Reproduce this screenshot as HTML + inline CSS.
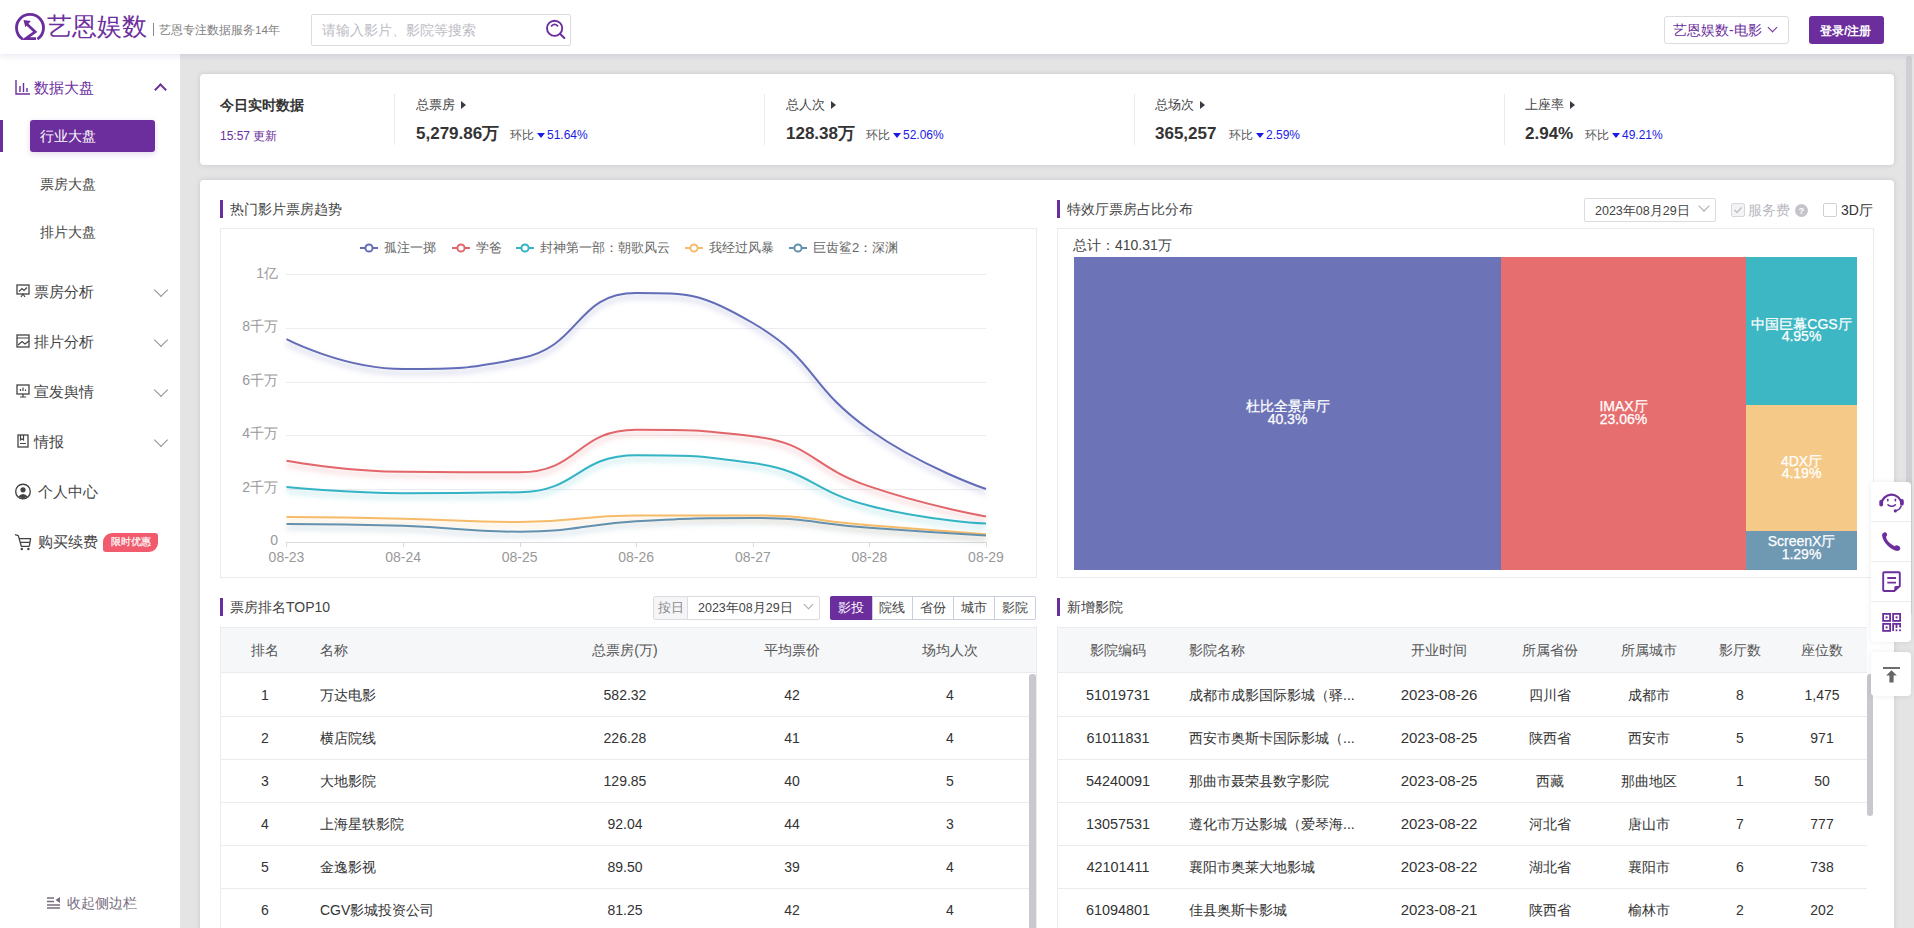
<!DOCTYPE html>
<html><head><meta charset="utf-8"><style>
*{margin:0;padding:0;box-sizing:border-box}
html,body{width:1914px;height:928px;overflow:hidden}
body{font-family:"Liberation Sans",sans-serif;background:#e4e4e4;position:relative;color:#333}
.abs{position:absolute}
.t{position:absolute;white-space:nowrap;line-height:1}
#hdr{position:absolute;left:0;top:0;width:1914px;height:54px;background:#fff;box-shadow:0 2px 6px rgba(50,50,130,0.11);z-index:5}
#side{position:absolute;left:0;top:54px;width:180px;height:874px;background:#fff}
.card{position:absolute;background:#fff;border-radius:4px;box-shadow:0 0 5px rgba(60,40,100,0.16)}
.purple{color:#6c2e9d}
.bar{position:absolute;width:3px;height:18px;background:#6c2e9d}
.box{position:absolute;border:1px solid #ebebef}
.row{position:absolute;height:1px;background:#ebebef}
.cell{position:absolute;white-space:nowrap;line-height:1;font-size:14px;color:#333}
.c{transform:translateX(-50%)}
.hd{color:#555}
.chev{position:absolute;width:10px;height:10px;border-right:1.7px solid #8f8f96;border-bottom:1.7px solid #8f8f96;transform:rotate(45deg)}

</style></head><body>
<div id="hdr">
  <svg class="abs" style="left:0;top:0" width="50" height="50" viewBox="0 0 50 50">
    <path d="M22.6 39.2 A13.5 13.5 0 1 1 37.4 39.2" fill="none" stroke="#6c2e9d" stroke-width="2.8"/>
    <path d="M26.8 24 L35.2 31.9 L25.6 38.6 L36 38.6" fill="none" stroke="#6c2e9d" stroke-width="2.7" stroke-linejoin="miter" stroke-miterlimit="6"/>
    <path d="M23.5 20.1 L30.9 21 L25.3 27.2Z" fill="#6c2e9d"/>
  </svg>
  <div class="t purple" style="left:47px;top:14.5px;font-size:24.7px">艺恩娱数</div>
  <div class="abs" style="left:153px;top:23px;width:1px;height:13px;background:#888"></div>
  <div class="t" style="left:159px;top:23.5px;font-size:11.7px;color:#808080">艺恩专注数据服务14年</div>
  <div class="abs" style="left:311px;top:14px;width:260px;height:32px;border:1px solid #dcdce0;border-radius:2px"></div>
  <div class="t" style="left:322px;top:23px;font-size:14px;color:#bcbcc4">请输入影片、影院等搜索</div>
  <svg class="abs" style="left:535px;top:12px" width="40" height="36" viewBox="535 12 40 36">
    <circle cx="554.6" cy="28.3" r="7.6" fill="none" stroke="#6c2e9d" stroke-width="1.9"/>
    <path d="M551.6 25.8 Q554.6 23 557.6 25.8" fill="none" stroke="#6c2e9d" stroke-width="1.8" stroke-linecap="round"/>
    <path d="M560 33.8 L564.3 38" stroke="#6c2e9d" stroke-width="2.1" stroke-linecap="round"/>
  </svg>
  <div class="abs" style="left:1664px;top:16px;width:125px;height:28px;border:1px solid #dcdce0;border-radius:3px"></div>
  <div class="t purple" style="left:1673px;top:23px;font-size:14px">艺恩娱数-电影</div>
  <div class="abs" style="left:1769px;top:24px;width:7px;height:7px;border-right:1.5px solid #6c2e9d;border-bottom:1.5px solid #6c2e9d;transform:rotate(45deg)"></div>
  <div class="abs" style="left:1809px;top:16px;width:75px;height:28px;background:#6c2e9d;border-radius:3px"></div>
  <div class="t" style="left:1820px;top:24.5px;font-size:12.2px;color:#fff;font-weight:bold">登录/注册</div>
</div>

<div id="side">
</div>
<!--sidebar content uses absolute page coords-->
<svg class="abs" style="left:15px;top:79px" width="16" height="16" viewBox="0 0 16 16">
  <path d="M1 1 V15 H15" fill="none" stroke="#6c2e9d" stroke-width="1.4"/>
  <path d="M5 7 V13 M8.5 4 V13 M12 9 V13" stroke="#6c2e9d" stroke-width="1.4"/>
</svg>
<div class="t purple" style="left:34px;top:80px;font-size:15px">数据大盘</div>
<div class="abs" style="left:156px;top:85px;width:9px;height:9px;border-left:2px solid #6c2e9d;border-top:2px solid #6c2e9d;transform:rotate(45deg)"></div>
<div class="abs" style="left:0;top:120px;width:3px;height:32px;background:#6c2e9d"></div>
<div class="abs" style="left:30px;top:120px;width:125px;height:32px;background:#6c2e9d;border-radius:3px;box-shadow:0 2px 6px rgba(108,46,157,0.18)"></div>
<div class="t" style="left:40px;top:129px;font-size:14px;color:#fff">行业大盘</div>
<div class="t" style="left:40px;top:177px;font-size:14px;color:#444">票房大盘</div>
<div class="t" style="left:40px;top:225px;font-size:14px;color:#444">排片大盘</div>

<!-- menu items -->
<svg class="abs" style="left:16px;top:284px" width="14" height="14" viewBox="0 0 14 14"><rect x="1" y="1" width="12" height="9" fill="none" stroke="#444" stroke-width="1.3"/><path d="M3 7.5 L6 4.5 L8 6.5 L11 3.5 M5 13 L7 10 L9 13" fill="none" stroke="#444" stroke-width="1.2"/></svg>
<div class="t" style="left:34px;top:284px;font-size:15px;color:#444">票房分析</div>
<div class="chev" style="left:155.5px;top:284.5px"></div>
<svg class="abs" style="left:16px;top:334px" width="14" height="14" viewBox="0 0 14 14"><rect x="1" y="1" width="12" height="12" fill="none" stroke="#444" stroke-width="1.3"/><path d="M1 4 H13 M2 11 L6 7.5 L9 10 L13 7" fill="none" stroke="#444" stroke-width="1.2"/></svg>
<div class="t" style="left:34px;top:334px;font-size:15px;color:#444">排片分析</div>
<div class="chev" style="left:155.5px;top:334.5px"></div>
<svg class="abs" style="left:16px;top:384px" width="14" height="14" viewBox="0 0 14 14"><rect x="1" y="1" width="12" height="9" fill="none" stroke="#444" stroke-width="1.3"/><path d="M4 13 H10 M7 10 V13 M4.5 7 V5 M7 7 V3.5 M9.5 7 V5.5" fill="none" stroke="#444" stroke-width="1.2"/></svg>
<div class="t" style="left:34px;top:384px;font-size:15px;color:#444">宣发舆情</div>
<div class="chev" style="left:155.5px;top:384.5px"></div>
<svg class="abs" style="left:17px;top:434px" width="12" height="14" viewBox="0 0 12 14"><rect x="1" y="1" width="10" height="12" fill="none" stroke="#444" stroke-width="1.3"/><path d="M3.5 1 V6 L5 5 L6.5 6 V1 M3 9.5 H9" fill="none" stroke="#444" stroke-width="1.2"/></svg>
<div class="t" style="left:34px;top:434px;font-size:15px;color:#444">情报</div>
<div class="chev" style="left:155.5px;top:434.5px"></div>
<svg class="abs" style="left:14px;top:483px" width="18" height="17" viewBox="0 0 18 17"><circle cx="9" cy="8.5" r="7.3" fill="none" stroke="#444" stroke-width="1.4"/><circle cx="9" cy="6.8" r="2.6" fill="#444"/><path d="M4.2 13.5 Q9 8.5 13.8 13.5 Q9 17 4.2 13.5Z" fill="#444"/></svg>
<div class="t" style="left:38px;top:484px;font-size:15px;color:#444">个人中心</div>
<svg class="abs" style="left:0;top:520px" width="40" height="40" viewBox="0 520 40 40"><path d="M15 534.6 L18.3 535.6 L21.3 546.3 H29.2 M19.4 538.6 H30.6 L29.3 546.3 M20.5 542.4 H29.9" fill="none" stroke="#444" stroke-width="1.3" stroke-linejoin="round"/><circle cx="21.8" cy="549" r="1.2" fill="#444"/><circle cx="28.4" cy="549" r="1.2" fill="#444"/></svg>
<div class="t" style="left:38px;top:534px;font-size:15px;color:#444">购买续费</div>
<div class="abs" style="left:103px;top:533px;width:55px;height:19px;background:#f25a6e;border-radius:9px 3px 9px 3px"></div>
<div class="t" style="left:111px;top:537px;font-size:10px;color:#fff;-webkit-text-stroke:0.2px #fff">限时优惠</div>

<svg class="abs" style="left:47px;top:897px" width="13" height="12" viewBox="0 0 13 12"><path d="M0 1 H7 M0 4.5 H7 M0 8 H13 M0 11 H13" stroke="#776c7e" stroke-width="1.3"/><path d="M13 0 V6 L8.5 3Z" fill="#776c7e"/></svg>
<div class="t" style="left:67px;top:896px;font-size:14px;color:#776c7e">收起侧边栏</div>

<!-- scrollbar -->
<div class="abs" style="left:1906px;top:56px;width:6px;height:560px;background:#d0d0d4;border-radius:3px"></div>

<!-- stats card -->
<div class="card" style="left:200px;top:74px;width:1694px;height:91px"></div>
<div class="t" style="left:220px;top:98px;font-size:14px;font-weight:bold;color:#333">今日实时数据</div>
<div class="t purple" style="left:220px;top:130px;font-size:12px">15:57 更新</div>
<div class="abs" style="left:394px;top:94px;width:1px;height:51px;background:#ebebef"></div>
<div class="abs" style="left:764px;top:94px;width:1px;height:51px;background:#ebebef"></div>
<div class="abs" style="left:1134px;top:94px;width:1px;height:51px;background:#ebebef"></div>
<div class="abs" style="left:1504px;top:94px;width:1px;height:51px;background:#ebebef"></div>
<div class="t" style="left:416px;top:98px;font-size:13px;color:#444">总票房</div>
<div class="abs" style="left:461px;top:101px;width:0;height:0;border-top:4px solid transparent;border-bottom:4px solid transparent;border-left:5.5px solid #3a3a44"></div>
<span id="v_416" class="t" style="left:416px;top:125px;font-size:17px;font-weight:bold;color:#333">5,279.86万</span>
<span class="t" style="left:510px;top:129px;font-size:12px;color:#555">环比<span style="display:inline-block;width:0;height:0;border-left:4px solid transparent;border-right:4px solid transparent;border-top:5px solid #1a1ae6;margin:0 2px 1px 3px;vertical-align:middle"></span><span style="color:#1a1ae6">51.64%</span></span>
<div class="t" style="left:786px;top:98px;font-size:13px;color:#444">总人次</div>
<div class="abs" style="left:831px;top:101px;width:0;height:0;border-top:4px solid transparent;border-bottom:4px solid transparent;border-left:5.5px solid #3a3a44"></div>
<span id="v_786" class="t" style="left:786px;top:125px;font-size:17px;font-weight:bold;color:#333">128.38万</span>
<span class="t" style="left:866px;top:129px;font-size:12px;color:#555">环比<span style="display:inline-block;width:0;height:0;border-left:4px solid transparent;border-right:4px solid transparent;border-top:5px solid #1a1ae6;margin:0 2px 1px 3px;vertical-align:middle"></span><span style="color:#1a1ae6">52.06%</span></span>
<div class="t" style="left:1155px;top:98px;font-size:13px;color:#444">总场次</div>
<div class="abs" style="left:1200px;top:101px;width:0;height:0;border-top:4px solid transparent;border-bottom:4px solid transparent;border-left:5.5px solid #3a3a44"></div>
<span id="v_1155" class="t" style="left:1155px;top:125px;font-size:17px;font-weight:bold;color:#333">365,257</span>
<span class="t" style="left:1229px;top:129px;font-size:12px;color:#555">环比<span style="display:inline-block;width:0;height:0;border-left:4px solid transparent;border-right:4px solid transparent;border-top:5px solid #1a1ae6;margin:0 2px 1px 3px;vertical-align:middle"></span><span style="color:#1a1ae6">2.59%</span></span>
<div class="t" style="left:1525px;top:98px;font-size:13px;color:#444">上座率</div>
<div class="abs" style="left:1570px;top:101px;width:0;height:0;border-top:4px solid transparent;border-bottom:4px solid transparent;border-left:5.5px solid #3a3a44"></div>
<span id="v_1525" class="t" style="left:1525px;top:125px;font-size:17px;font-weight:bold;color:#333">2.94%</span>
<span class="t" style="left:1585px;top:129px;font-size:12px;color:#555">环比<span style="display:inline-block;width:0;height:0;border-left:4px solid transparent;border-right:4px solid transparent;border-top:5px solid #1a1ae6;margin:0 2px 1px 3px;vertical-align:middle"></span><span style="color:#1a1ae6">49.21%</span></span>

<!-- main card -->
<div class="card" style="left:200px;top:180px;width:1694px;height:760px"></div>
<div class="bar" style="left:220px;top:200px"></div>
<div class="t" style="left:230px;top:202px;font-size:14px;color:#444">热门影片票房趋势</div>
<div class="box" style="left:220px;top:228px;width:817px;height:350px"></div>
<svg class="abs" style="left:360px;top:243px" width="18" height="10" viewBox="0 0 18 10"><path d="M0 5 H18" stroke="#626cb7" stroke-width="2"/><circle cx="9" cy="5" r="3.6" fill="#fff" stroke="#626cb7" stroke-width="2"/></svg>
<div class="t" style="left:384px;top:241px;font-size:13px;color:#666">孤注一掷</div>
<svg class="abs" style="left:452px;top:243px" width="18" height="10" viewBox="0 0 18 10"><path d="M0 5 H18" stroke="#e2656a" stroke-width="2"/><circle cx="9" cy="5" r="3.6" fill="#fff" stroke="#e2656a" stroke-width="2"/></svg>
<div class="t" style="left:476px;top:241px;font-size:13px;color:#666">学爸</div>
<svg class="abs" style="left:516px;top:243px" width="18" height="10" viewBox="0 0 18 10"><path d="M0 5 H18" stroke="#33b3c3" stroke-width="2"/><circle cx="9" cy="5" r="3.6" fill="#fff" stroke="#33b3c3" stroke-width="2"/></svg>
<div class="t" style="left:540px;top:241px;font-size:13px;color:#666">封神第一部：朝歌风云</div>
<svg class="abs" style="left:685px;top:243px" width="18" height="10" viewBox="0 0 18 10"><path d="M0 5 H18" stroke="#f5bb68" stroke-width="2"/><circle cx="9" cy="5" r="3.6" fill="#fff" stroke="#f5bb68" stroke-width="2"/></svg>
<div class="t" style="left:709px;top:241px;font-size:13px;color:#666">我经过风暴</div>
<svg class="abs" style="left:789px;top:243px" width="18" height="10" viewBox="0 0 18 10"><path d="M0 5 H18" stroke="#6290ae" stroke-width="2"/><circle cx="9" cy="5" r="3.6" fill="#fff" stroke="#6290ae" stroke-width="2"/></svg>
<div class="t" style="left:813px;top:241px;font-size:13px;color:#666">巨齿鲨2：深渊</div>
<div class="t" style="right:1636px;top:265.5px;font-size:14px;color:#999">1亿</div>
<div class="t" style="right:1636px;top:319.1px;font-size:14px;color:#999">8千万</div>
<div class="t" style="right:1636px;top:372.6px;font-size:14px;color:#999">6千万</div>
<div class="t" style="right:1636px;top:426.1px;font-size:14px;color:#999">4千万</div>
<div class="t" style="right:1636px;top:479.7px;font-size:14px;color:#999">2千万</div>
<div class="t" style="right:1636px;top:533.2px;font-size:14px;color:#999">0</div>
<div class="t c" style="left:286.5px;top:550px;font-size:14px;color:#999">08-23</div>
<div class="t c" style="left:403.1px;top:550px;font-size:14px;color:#999">08-24</div>
<div class="t c" style="left:519.7px;top:550px;font-size:14px;color:#999">08-25</div>
<div class="t c" style="left:636.2px;top:550px;font-size:14px;color:#999">08-26</div>
<div class="t c" style="left:752.8px;top:550px;font-size:14px;color:#999">08-27</div>
<div class="t c" style="left:869.4px;top:550px;font-size:14px;color:#999">08-28</div>
<div class="t c" style="left:986.0px;top:550px;font-size:14px;color:#999">08-29</div>
<svg class="abs" style="left:0;top:0" width="1914" height="928" viewBox="0 0 1914 928">
<defs><filter id="sh" x="-10%" y="-50%" width="120%" height="200%"><feGaussianBlur stdDeviation="2.5"/></filter></defs>
<line x1="286" x2="986" y1="274.5" y2="274.5" stroke="#ededf0" stroke-width="1"/>
<line x1="286" x2="986" y1="328.5" y2="328.5" stroke="#ededf0" stroke-width="1"/>
<line x1="286" x2="986" y1="382.5" y2="382.5" stroke="#ededf0" stroke-width="1"/>
<line x1="286" x2="986" y1="435.5" y2="435.5" stroke="#ededf0" stroke-width="1"/>
<line x1="286" x2="986" y1="489.5" y2="489.5" stroke="#ededf0" stroke-width="1"/>
<line x1="286" x2="986" y1="542.5" y2="542.5" stroke="#dcdce0" stroke-width="1"/>
<line x1="286.5" x2="286.5" y1="542" y2="547" stroke="#d9d9de" stroke-width="1"/>
<line x1="403.5" x2="403.5" y1="542" y2="547" stroke="#d9d9de" stroke-width="1"/>
<line x1="520.5" x2="520.5" y1="542" y2="547" stroke="#d9d9de" stroke-width="1"/>
<line x1="636.5" x2="636.5" y1="542" y2="547" stroke="#d9d9de" stroke-width="1"/>
<line x1="753.5" x2="753.5" y1="542" y2="547" stroke="#d9d9de" stroke-width="1"/>
<line x1="869.5" x2="869.5" y1="542" y2="547" stroke="#d9d9de" stroke-width="1"/>
<line x1="986.5" x2="986.5" y1="542" y2="547" stroke="#d9d9de" stroke-width="1"/>
<path d="M286.50 339.20 C286.50 339.20 343.98 369.00 403.08 369.00 C460.57 369.00 465.26 369.00 519.67 358.60 C581.85 346.71 574.89 293.00 636.25 293.00 C691.47 293.00 702.44 293.43 752.83 323.00 C819.02 361.83 805.60 384.37 869.42 429.80 C922.19 467.37 986.00 489.00 986.00 489.00" fill="none" stroke="#626cb7" stroke-width="5" stroke-opacity="0.18" transform="translate(0,4)" filter="url(#sh)"/>
<path d="M286.50 460.80 C286.50 460.80 344.66 471.40 403.08 471.80 C461.25 472.20 463.18 472.20 519.67 472.20 C579.77 472.20 576.19 429.80 636.25 429.80 C692.78 429.80 696.96 429.80 752.83 436.30 C813.55 443.36 809.60 465.82 869.42 486.40 C926.18 505.92 986.00 516.50 986.00 516.50" fill="none" stroke="#e2656a" stroke-width="5" stroke-opacity="0.18" transform="translate(0,4)" filter="url(#sh)"/>
<path d="M286.50 487.00 C286.50 487.00 344.75 493.20 403.08 493.20 C461.33 493.20 462.76 493.20 519.67 492.20 C579.35 491.15 576.63 455.30 636.25 455.30 C693.22 455.30 696.31 455.30 752.83 463.10 C812.89 471.39 809.63 490.29 869.42 505.80 C926.21 520.54 986.00 523.60 986.00 523.60" fill="none" stroke="#33b3c3" stroke-width="5" stroke-opacity="0.18" transform="translate(0,4)" filter="url(#sh)"/>
<path d="M286.50 517.10 C286.50 517.10 344.80 517.48 403.08 518.70 C461.38 519.93 461.41 522.00 519.67 522.00 C577.99 522.00 577.91 515.50 636.25 515.50 C694.50 515.50 694.64 515.50 752.83 515.50 C811.23 515.50 811.11 520.50 869.42 525.20 C927.70 529.90 986.00 534.30 986.00 534.30" fill="none" stroke="#f5bb68" stroke-width="5" stroke-opacity="0.18" transform="translate(0,4)" filter="url(#sh)"/>
<path d="M286.50 523.90 C286.50 523.90 344.83 523.90 403.08 525.80 C461.41 527.70 461.45 531.70 519.67 531.70 C578.04 531.70 577.85 524.61 636.25 521.30 C694.44 518.00 694.63 518.00 752.83 518.00 C811.22 518.00 811.09 523.42 869.42 527.80 C927.67 532.17 986.00 535.50 986.00 535.50" fill="none" stroke="#6290ae" stroke-width="5" stroke-opacity="0.18" transform="translate(0,4)" filter="url(#sh)"/>
<path d="M286.50 339.20 C286.50 339.20 343.98 369.00 403.08 369.00 C460.57 369.00 465.26 369.00 519.67 358.60 C581.85 346.71 574.89 293.00 636.25 293.00 C691.47 293.00 702.44 293.43 752.83 323.00 C819.02 361.83 805.60 384.37 869.42 429.80 C922.19 467.37 986.00 489.00 986.00 489.00" fill="none" stroke="#626cb7" stroke-width="2"/>
<path d="M286.50 460.80 C286.50 460.80 344.66 471.40 403.08 471.80 C461.25 472.20 463.18 472.20 519.67 472.20 C579.77 472.20 576.19 429.80 636.25 429.80 C692.78 429.80 696.96 429.80 752.83 436.30 C813.55 443.36 809.60 465.82 869.42 486.40 C926.18 505.92 986.00 516.50 986.00 516.50" fill="none" stroke="#e2656a" stroke-width="2"/>
<path d="M286.50 487.00 C286.50 487.00 344.75 493.20 403.08 493.20 C461.33 493.20 462.76 493.20 519.67 492.20 C579.35 491.15 576.63 455.30 636.25 455.30 C693.22 455.30 696.31 455.30 752.83 463.10 C812.89 471.39 809.63 490.29 869.42 505.80 C926.21 520.54 986.00 523.60 986.00 523.60" fill="none" stroke="#33b3c3" stroke-width="2"/>
<path d="M286.50 517.10 C286.50 517.10 344.80 517.48 403.08 518.70 C461.38 519.93 461.41 522.00 519.67 522.00 C577.99 522.00 577.91 515.50 636.25 515.50 C694.50 515.50 694.64 515.50 752.83 515.50 C811.23 515.50 811.11 520.50 869.42 525.20 C927.70 529.90 986.00 534.30 986.00 534.30" fill="none" stroke="#f5bb68" stroke-width="2"/>
<path d="M286.50 523.90 C286.50 523.90 344.83 523.90 403.08 525.80 C461.41 527.70 461.45 531.70 519.67 531.70 C578.04 531.70 577.85 524.61 636.25 521.30 C694.44 518.00 694.63 518.00 752.83 518.00 C811.22 518.00 811.09 523.42 869.42 527.80 C927.67 532.17 986.00 535.50 986.00 535.50" fill="none" stroke="#6290ae" stroke-width="2"/>
</svg>

<div class="bar" style="left:1057px;top:200px"></div>
<div class="t" style="left:1067px;top:202px;font-size:14px;color:#444">特效厅票房占比分布</div>
<div class="abs" style="left:1584px;top:198px;width:132px;height:24px;border:1px solid #dcdce0;border-radius:2px"></div>
<div class="t" style="left:1595px;top:205px;font-size:12.5px;color:#444">2023年08月29日</div>
<div class="abs" style="left:1700px;top:202px;width:8px;height:8px;border-right:1px solid #aaa;border-bottom:1px solid #aaa;transform:rotate(45deg)"></div>
<div class="abs" style="left:1731px;top:203px;width:14px;height:14px;border:1px solid #d6d6dc;background:#f3f3f5;border-radius:2px"></div>
<svg class="abs" style="left:1733px;top:205px" width="10" height="10" viewBox="0 0 10 10"><path d="M1.5 5 L4 7.5 L8.5 2.5" fill="none" stroke="#b8b8c0" stroke-width="1.2"/></svg>
<div class="t" style="left:1748px;top:203px;font-size:14px;color:#b8b8c0">服务费</div>
<div class="abs" style="left:1795px;top:204px;width:13px;height:13px;border-radius:50%;background:#c4c4ca"></div>
<div class="t" style="left:1798.5px;top:206px;font-size:9.5px;color:#fff;font-weight:bold">?</div>
<div class="abs" style="left:1823px;top:203px;width:14px;height:14px;border:1px solid #d0d0d6;border-radius:2px"></div>
<div class="t" style="left:1841px;top:203px;font-size:14px;color:#333">3D厅</div>
<div class="box" style="left:1057px;top:228px;width:817px;height:350px"></div>
<div class="t" style="left:1073px;top:238px;font-size:14px;color:#444">总计：410.31万</div>
<div class="abs" style="left:1074px;top:257px;width:427px;height:313px;background:#6c74b7"></div>
<div class="t" style="left:1074px;top:400.0px;width:427px;text-align:center;font-size:14px;line-height:12.5px;color:#fff;-webkit-text-stroke:0.25px #fff">杜比全景声厅<br>40.3%</div>
<div class="abs" style="left:1501px;top:257px;width:245px;height:313px;background:#e76e6f"></div>
<div class="t" style="left:1501px;top:400.0px;width:245px;text-align:center;font-size:14px;line-height:12.5px;color:#fff;-webkit-text-stroke:0.25px #fff">IMAX厅<br>23.06%</div>
<div class="abs" style="left:1746px;top:257px;width:111px;height:148px;background:#3eb7c4"></div>
<div class="t" style="left:1746px;top:317.5px;width:111px;text-align:center;font-size:14px;line-height:12.5px;color:#fff;-webkit-text-stroke:0.25px #fff">中国巨幕CGS厅<br>4.95%</div>
<div class="abs" style="left:1746px;top:405px;width:111px;height:126px;background:#f5ca89"></div>
<div class="t" style="left:1746px;top:454.5px;width:111px;text-align:center;font-size:14px;line-height:12.5px;color:#fff;-webkit-text-stroke:0.25px #fff">4DX厅<br>4.19%</div>
<div class="abs" style="left:1746px;top:531px;width:111px;height:39px;background:#6f98b3"></div>
<div class="t" style="left:1746px;top:535.0px;width:111px;text-align:center;font-size:14px;line-height:12.5px;color:#fff;-webkit-text-stroke:0.25px #fff">ScreenX厅<br>1.29%</div>

<div class="bar" style="left:220px;top:598px"></div>
<div class="t" style="left:230px;top:600px;font-size:14px;color:#444">票房排名TOP10</div>
<div class="abs" style="left:653px;top:596px;width:167px;height:24px;border:1px solid #dcdce0;border-radius:2px"></div>
<div class="abs" style="left:654px;top:597px;width:34px;height:22px;background:#f5f5f7;border-right:1px solid #dcdce0"></div>
<div class="t" style="left:658px;top:602px;font-size:12.5px;color:#888">按日</div>
<div class="t" style="left:698px;top:602px;font-size:12.5px;color:#444">2023年08月29日</div>
<div class="abs" style="left:805px;top:601px;width:7px;height:7px;border-right:1px solid #aaa;border-bottom:1px solid #aaa;transform:rotate(45deg)"></div>
<div class="abs" style="left:830px;top:596px;width:206px;height:24px;border:1px solid #c9cfe0;border-radius:2px"></div>
<div class="abs" style="left:830px;top:596px;width:42px;height:24px;background:#6c2e9d;border-radius:2px 0 0 2px"></div>
<div class="t c" style="left:851.0px;top:602px;font-size:12.5px;color:#fff">影投</div>
<div class="abs" style="left:872px;top:597px;width:1px;height:22px;background:#c9cfe0"></div>
<div class="t c" style="left:892.0px;top:602px;font-size:12.5px;color:#444">院线</div>
<div class="abs" style="left:912px;top:597px;width:1px;height:22px;background:#c9cfe0"></div>
<div class="t c" style="left:932.5px;top:602px;font-size:12.5px;color:#444">省份</div>
<div class="abs" style="left:953px;top:597px;width:1px;height:22px;background:#c9cfe0"></div>
<div class="t c" style="left:973.5px;top:602px;font-size:12.5px;color:#444">城市</div>
<div class="abs" style="left:994px;top:597px;width:1px;height:22px;background:#c9cfe0"></div>
<div class="t c" style="left:1015.0px;top:602px;font-size:12.5px;color:#444">影院</div>
<div class="abs" style="left:220px;top:626px;width:817px;height:302px;border-left:1px solid #ebebef;border-right:1px solid #ebebef"></div>
<div class="abs" style="left:221px;top:627px;width:815px;height:46px;background:#f6f7f9;border-top:1px solid #ebebef;border-bottom:1px solid #ebebef"></div>
<div class="cell hd c" style="left:265px;top:643px">排名</div>
<div class="cell hd " style="left:320px;top:643px">名称</div>
<div class="cell hd c" style="left:625px;top:643px">总票房(万)</div>
<div class="cell hd c" style="left:792px;top:643px">平均票价</div>
<div class="cell hd c" style="left:950px;top:643px">场均人次</div>
<div class="row" style="left:221px;top:716px;width:815px"></div>
<div class="cell c" style="left:265px;top:688px">1</div>
<div class="cell " style="left:320px;top:688px">万达电影</div>
<div class="cell c" style="left:625px;top:688px">582.32</div>
<div class="cell c" style="left:792px;top:688px">42</div>
<div class="cell c" style="left:950px;top:688px">4</div>
<div class="row" style="left:221px;top:759px;width:815px"></div>
<div class="cell c" style="left:265px;top:731px">2</div>
<div class="cell " style="left:320px;top:731px">横店院线</div>
<div class="cell c" style="left:625px;top:731px">226.28</div>
<div class="cell c" style="left:792px;top:731px">41</div>
<div class="cell c" style="left:950px;top:731px">4</div>
<div class="row" style="left:221px;top:802px;width:815px"></div>
<div class="cell c" style="left:265px;top:774px">3</div>
<div class="cell " style="left:320px;top:774px">大地影院</div>
<div class="cell c" style="left:625px;top:774px">129.85</div>
<div class="cell c" style="left:792px;top:774px">40</div>
<div class="cell c" style="left:950px;top:774px">5</div>
<div class="row" style="left:221px;top:845px;width:815px"></div>
<div class="cell c" style="left:265px;top:817px">4</div>
<div class="cell " style="left:320px;top:817px">上海星轶影院</div>
<div class="cell c" style="left:625px;top:817px">92.04</div>
<div class="cell c" style="left:792px;top:817px">44</div>
<div class="cell c" style="left:950px;top:817px">3</div>
<div class="row" style="left:221px;top:888px;width:815px"></div>
<div class="cell c" style="left:265px;top:860px">5</div>
<div class="cell " style="left:320px;top:860px">金逸影视</div>
<div class="cell c" style="left:625px;top:860px">89.50</div>
<div class="cell c" style="left:792px;top:860px">39</div>
<div class="cell c" style="left:950px;top:860px">4</div>
<div class="row" style="left:221px;top:931px;width:815px"></div>
<div class="cell c" style="left:265px;top:903px">6</div>
<div class="cell " style="left:320px;top:903px">CGV影城投资公司</div>
<div class="cell c" style="left:625px;top:903px">81.25</div>
<div class="cell c" style="left:792px;top:903px">42</div>
<div class="cell c" style="left:950px;top:903px">4</div>
<div class="abs" style="left:1029px;top:674px;width:7px;height:260px;background:#c8c8ce;border-radius:3px"></div>
<div class="bar" style="left:1057px;top:598px"></div>
<div class="t" style="left:1067px;top:600px;font-size:14px;color:#444">新增影院</div>
<div class="abs" style="left:1057px;top:626px;width:817px;height:302px;border-left:1px solid #ebebef"></div>
<div class="abs" style="left:1058px;top:627px;width:809px;height:46px;background:#f6f7f9;border-top:1px solid #ebebef;border-bottom:1px solid #ebebef"></div>
<div class="cell hd c" style="left:1118px;top:643px">影院编码</div>
<div class="cell hd " style="left:1189px;top:643px">影院名称</div>
<div class="cell hd c" style="left:1439px;top:643px">开业时间</div>
<div class="cell hd c" style="left:1550px;top:643px">所属省份</div>
<div class="cell hd c" style="left:1649px;top:643px">所属城市</div>
<div class="cell hd c" style="left:1740px;top:643px">影厅数</div>
<div class="cell hd c" style="left:1822px;top:643px">座位数</div>
<div class="row" style="left:1058px;top:716px;width:809px"></div>
<div class="cell c" style="left:1118px;top:688px;font-size:14.4px;">51019731</div>
<div class="cell " style="left:1189px;top:688px;">成都市成影国际影城（驿...</div>
<div class="cell c" style="left:1439px;top:688px;font-size:15px;margin-top:-1px;">2023-08-26</div>
<div class="cell c" style="left:1550px;top:688px;">四川省</div>
<div class="cell c" style="left:1649px;top:688px;">成都市</div>
<div class="cell c" style="left:1740px;top:688px;">8</div>
<div class="cell c" style="left:1822px;top:688px;">1,475</div>
<div class="row" style="left:1058px;top:759px;width:809px"></div>
<div class="cell c" style="left:1118px;top:731px;font-size:14.4px;">61011831</div>
<div class="cell " style="left:1189px;top:731px;">西安市奥斯卡国际影城（...</div>
<div class="cell c" style="left:1439px;top:731px;font-size:15px;margin-top:-1px;">2023-08-25</div>
<div class="cell c" style="left:1550px;top:731px;">陕西省</div>
<div class="cell c" style="left:1649px;top:731px;">西安市</div>
<div class="cell c" style="left:1740px;top:731px;">5</div>
<div class="cell c" style="left:1822px;top:731px;">971</div>
<div class="row" style="left:1058px;top:802px;width:809px"></div>
<div class="cell c" style="left:1118px;top:774px;font-size:14.4px;">54240091</div>
<div class="cell " style="left:1189px;top:774px;">那曲市聂荣县数字影院</div>
<div class="cell c" style="left:1439px;top:774px;font-size:15px;margin-top:-1px;">2023-08-25</div>
<div class="cell c" style="left:1550px;top:774px;">西藏</div>
<div class="cell c" style="left:1649px;top:774px;">那曲地区</div>
<div class="cell c" style="left:1740px;top:774px;">1</div>
<div class="cell c" style="left:1822px;top:774px;">50</div>
<div class="row" style="left:1058px;top:845px;width:809px"></div>
<div class="cell c" style="left:1118px;top:817px;font-size:14.4px;">13057531</div>
<div class="cell " style="left:1189px;top:817px;">遵化市万达影城（爱琴海...</div>
<div class="cell c" style="left:1439px;top:817px;font-size:15px;margin-top:-1px;">2023-08-22</div>
<div class="cell c" style="left:1550px;top:817px;">河北省</div>
<div class="cell c" style="left:1649px;top:817px;">唐山市</div>
<div class="cell c" style="left:1740px;top:817px;">7</div>
<div class="cell c" style="left:1822px;top:817px;">777</div>
<div class="row" style="left:1058px;top:888px;width:809px"></div>
<div class="cell c" style="left:1118px;top:860px;font-size:14.4px;">42101411</div>
<div class="cell " style="left:1189px;top:860px;">襄阳市奥莱大地影城</div>
<div class="cell c" style="left:1439px;top:860px;font-size:15px;margin-top:-1px;">2023-08-22</div>
<div class="cell c" style="left:1550px;top:860px;">湖北省</div>
<div class="cell c" style="left:1649px;top:860px;">襄阳市</div>
<div class="cell c" style="left:1740px;top:860px;">6</div>
<div class="cell c" style="left:1822px;top:860px;">738</div>
<div class="row" style="left:1058px;top:931px;width:809px"></div>
<div class="cell c" style="left:1118px;top:903px;font-size:14.4px;">61094801</div>
<div class="cell " style="left:1189px;top:903px;">佳县奥斯卡影城</div>
<div class="cell c" style="left:1439px;top:903px;font-size:15px;margin-top:-1px;">2023-08-21</div>
<div class="cell c" style="left:1550px;top:903px;">陕西省</div>
<div class="cell c" style="left:1649px;top:903px;">榆林市</div>
<div class="cell c" style="left:1740px;top:903px;">2</div>
<div class="cell c" style="left:1822px;top:903px;">202</div>
<div class="abs" style="left:1867px;top:674px;width:6px;height:142px;background:#c8c8ce;border-radius:3px"></div>

<!-- float toolbar -->
<div class="abs" style="left:1871px;top:482px;width:40px;height:160px;background:#fff;border-radius:4px;box-shadow:0 0 6px rgba(0,0,0,0.08)"></div>
<div class="abs" style="left:1871px;top:521px;width:40px;height:1px;background:#ececf0"></div>
<div class="abs" style="left:1871px;top:561px;width:40px;height:1px;background:#ececf0"></div>
<div class="abs" style="left:1871px;top:601px;width:40px;height:1px;background:#ececf0"></div>
<div class="abs" style="left:1871px;top:652px;width:40px;height:44px;background:#fff;border-radius:4px;box-shadow:0 0 6px rgba(0,0,0,0.08)"></div>
<svg class="abs" style="left:1868px;top:480px" width="46" height="220" viewBox="1868 480 46 220"><path d="M1881 504.5 A10.6 11.5 0 0 1 1901.8 503.5" fill="none" stroke="#6c2e9d" stroke-width="2.2"/><rect x="1879.3" y="499.8" width="3.8" height="6.6" rx="1.9" fill="#6c2e9d"/><rect x="1900" y="499" width="3.8" height="6.6" rx="1.9" fill="#6c2e9d"/><ellipse cx="1887.8" cy="500.1" rx="0.9" ry="1.5" fill="#6c2e9d"/><ellipse cx="1895.4" cy="500.1" rx="0.9" ry="1.5" fill="#6c2e9d"/><path d="M1888 504.8 Q1891.6 507.6 1895.3 504.8" fill="none" stroke="#6c2e9d" stroke-width="1.6" stroke-linecap="round"/><path d="M1901.3 505.5 Q1900 510 1895.8 510.8" fill="none" stroke="#6c2e9d" stroke-width="1.6"/><circle cx="1895.3" cy="510.9" r="1.6" fill="#6c2e9d"/><path d="M1884.6 532.2 Q1882.3 532.6 1882 535 Q1882.5 540.5 1887.5 545.5 Q1892.5 550.5 1897.5 550.9 Q1900 550.6 1900.4 548.4 Q1900.3 546.3 1898 545.4 Q1896 544.8 1894.6 546.2 Q1891 544.3 1888.2 541.4 Q1886 538.7 1886.1 536.8 Q1887.6 535.2 1886.9 533.5 Q1886.2 532.1 1884.6 532.2Z" fill="#6c2e9d"/><path d="M1884.2 572.2 H1898.9 Q1899.8 572.2 1899.8 573.1 V586 L1894.3 591 H1884.2 Q1883.2 591 1883.2 590 V573.2 Q1883.2 572.2 1884.2 572.2Z" fill="none" stroke="#6c2e9d" stroke-width="1.9" stroke-linejoin="round"/><path d="M1887.3 578 H1896 M1887.3 582.6 H1896" stroke="#6c2e9d" stroke-width="1.8"/><path d="M1899.8 586 L1894.3 591 V587.5 Q1894.3 586 1895.8 586Z" fill="#6c2e9d"/><rect x="1883.1" y="613.9" width="7" height="7" fill="none" stroke="#6c2e9d" stroke-width="1.8"/><rect x="1885.6" y="616.4" width="2" height="2" fill="#6c2e9d"/><rect x="1893.1" y="613.9" width="7" height="7" fill="none" stroke="#6c2e9d" stroke-width="1.8"/><rect x="1895.6" y="616.4" width="2" height="2" fill="#6c2e9d"/><rect x="1883.1" y="623.9" width="7" height="7" fill="none" stroke="#6c2e9d" stroke-width="1.8"/><rect x="1885.6" y="626.4" width="2" height="2" fill="#6c2e9d"/><path d="M1893.1 631.1 V623.9 H1900.1 V627.5 M1896.5 624 V628" fill="none" stroke="#6c2e9d" stroke-width="1.8"/><rect x="1895.6" y="629.4" width="1.8" height="1.8" fill="#6c2e9d"/><rect x="1899.1" y="629.4" width="1.8" height="1.8" fill="#6c2e9d"/><path d="M1883 668 H1900" stroke="#666" stroke-width="1.9"/><path d="M1891.5 670.2 L1896.8 675.4 H1893.6 V682.5 H1889.4 V675.4 H1886.2Z" fill="#666"/></svg>

</body></html>
